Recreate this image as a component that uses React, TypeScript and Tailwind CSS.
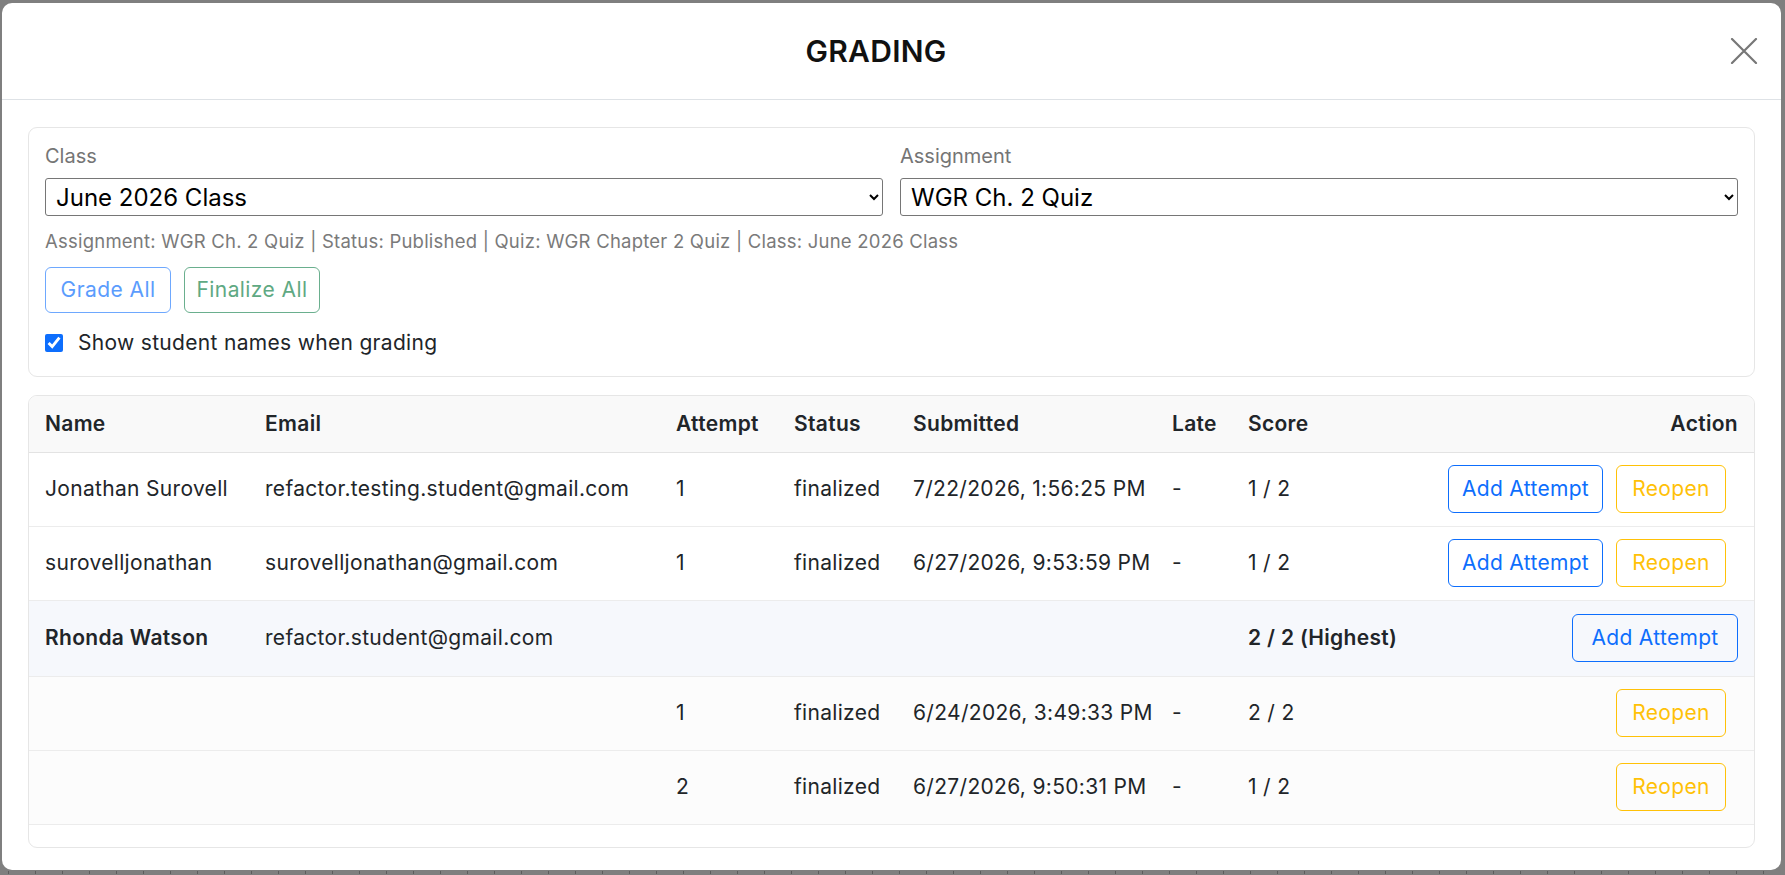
import React from "react";

type Row = {
  name?: string;
  email?: string;
  attempt?: string;
  status?: string;
  submitted?: string;
  late?: string;
  score: string;
  kind: "single" | "group" | "sub";
};

const ROWS: Row[] = [
  {
    name: "Jonathan Surovell",
    email: "refactor.testing.student@gmail.com",
    attempt: "1",
    status: "finalized",
    submitted: "7/22/2026, 1:56:25 PM",
    late: "-",
    score: "1 / 2",
    kind: "single",
  },
  {
    name: "surovelljonathan",
    email: "surovelljonathan@gmail.com",
    attempt: "1",
    status: "finalized",
    submitted: "6/27/2026, 9:53:59 PM",
    late: "-",
    score: "1 / 2",
    kind: "single",
  },
  {
    name: "Rhonda Watson",
    email: "refactor.student@gmail.com",
    score: "2 / 2 (Highest)",
    kind: "group",
  },
  {
    attempt: "1",
    status: "finalized",
    submitted: "6/24/2026, 3:49:33 PM",
    late: "-",
    score: "2 / 2",
    kind: "sub",
  },
  {
    attempt: "2",
    status: "finalized",
    submitted: "6/27/2026, 9:50:31 PM",
    late: "-",
    score: "1 / 2",
    kind: "sub",
  },
];

const HEADERS = ["Name", "Email", "Attempt", "Status", "Submitted", "Late", "Score"];

function AddAttemptButton() {
  return (
    <button className="h-[48px] w-[166px] rounded-[6px] border border-[#0d6efd] text-[21px] tracking-[0.015em] text-[#0d6efd]">
      Add Attempt
    </button>
  );
}

function ReopenButton() {
  return (
    <button className="h-[48px] w-[110px] rounded-[6px] border border-[#ffc107] text-[21px] tracking-[0.015em] text-[#ffc107]">
      Reopen
    </button>
  );
}

export default function App() {
  return (
    <div
      className="relative h-[875px] w-full overflow-hidden bg-[#7f7f7f]"
      style={{ fontFamily: "Inter, 'Noto Sans', sans-serif" }}
    >
      {/* ticks of the page behind the overlay */}
      <div className="absolute bottom-0 left-0 right-0 flex h-[4px] gap-[26px] px-[8px]">
        {Array.from({ length: 66 }).map((_, i) => (
          <span key={i} className="h-[3px] w-px bg-[#5c5c5c]" />
        ))}
      </div>

      <div className="absolute left-[2px] right-[4px] top-[3px] bottom-[5px] flex flex-col rounded-[10px] bg-white text-[#212529]">
        {/* Header */}
        <div className="flex h-[97px] shrink-0 items-center border-b border-[#dee2e6] pl-[26px] pr-[17px]">
          <h2 className="flex-1 text-center text-[30px] font-semibold tracking-[0.01em] text-[#111]">
            GRADING
          </h2>
          <button className="flex h-[40px] w-[40px] items-center justify-center">
            <svg width="28" height="26" viewBox="0 0 28 26" fill="none">
              <path
                d="M2 1L26 25M26 1L2 25"
                stroke="#777"
                strokeWidth="2.2"
                strokeLinecap="round"
              />
            </svg>
          </button>
        </div>

        {/* Body */}
        <div className="flex flex-col px-[26px] pt-[27px]">
          {/* Filters */}
          <div className="rounded-[9px] border border-[#e6e6e6] px-[16px] pb-[18px] pt-[13px]">
            <div className="grid grid-cols-2 gap-[17px]">
              {[
                { label: "Class", value: "June 2026 Class" },
                { label: "Assignment", value: "WGR Ch. 2 Quiz" },
              ].map((f) => (
                <div key={f.label} className="flex flex-col">
                  <label className="text-[20px] leading-[30px] text-[#757575]">
                    {f.label}
                  </label>
                  <select className="mt-[7px] h-[38px] rounded-[3px] border border-[#767676] bg-white pl-[6px] text-[24px] text-black">
                    <option>{f.value}</option>
                  </select>
                </div>
              ))}
            </div>
            <p className="mt-[12px] text-[18.5px] leading-[26px] tracking-[0.012em] text-[#7a7a7a]">
              Assignment: WGR Ch. 2 Quiz | Status: Published | Quiz: WGR Chapter 2 Quiz | Class:
              June 2026 Class
            </p>
            <div className="mt-[13px] flex gap-[13px]">
              <button className="h-[46px] w-[126px] rounded-[6px] border border-[#6ea8fe] text-[21px] tracking-[0.02em] text-[#5b9cfd]">
                Grade All
              </button>
              <button className="h-[46px] w-[136px] rounded-[6px] border border-[#6aaf8e] text-[21px] tracking-[0.02em] text-[#5fa983]">
                Finalize All
              </button>
            </div>
            <label className="mt-[15px] flex items-center gap-[15px] text-[21px] leading-[30px] tracking-[0.015em] text-[#212529]">
              <input
                type="checkbox"
                defaultChecked
                className="h-[18px] w-[18px] accent-[#0d6efd]"
              />
              Show student names when grading
            </label>
          </div>

          {/* Table */}
          <div className="mt-[18px] overflow-hidden rounded-[9px] border border-[#e6e6e6]">
            <table className="w-full table-fixed border-collapse text-left text-[21px] tracking-[0.015em]">
              <colgroup>
                <col className="w-[220px]" />
                <col className="w-[411px]" />
                <col className="w-[118px]" />
                <col className="w-[119px]" />
                <col className="w-[259px]" />
                <col className="w-[76px]" />
                <col className="w-[200px]" />
                <col />
              </colgroup>
              <thead>
                <tr className="h-[56px] border-b border-[#e3e3e3] bg-[#f9f9f9]">
                  {HEADERS.map((h) => (
                    <th key={h} className="px-[16px] font-semibold">
                      {h}
                    </th>
                  ))}
                  <th className="px-[16px] text-right font-semibold">Action</th>
                </tr>
              </thead>
              <tbody>
                {ROWS.map((r, i) => {
                  const bg =
                    r.kind === "group"
                      ? "bg-[#f6f8fc]"
                      : r.kind === "sub"
                        ? "bg-[#fcfcfc]"
                        : "bg-white";
                  const bold = r.kind === "group" ? "font-semibold" : "";
                  return (
                    <tr
                      key={i}
                      className={`${r.kind === "group" ? "h-[76px]" : "h-[74px]"} border-b border-[#ececec] ${bg}`}
                    >
                      <td className={`whitespace-nowrap px-[16px] ${bold}`}>{r.name}</td>
                      <td className="whitespace-nowrap px-[16px]">{r.email}</td>
                      <td className="px-[16px]">{r.attempt}</td>
                      <td className="px-[16px]">{r.status}</td>
                      <td className="whitespace-nowrap px-[16px]">{r.submitted}</td>
                      <td className="px-[16px]">{r.late}</td>
                      <td className={`whitespace-nowrap px-[16px] ${bold}`}>{r.score}</td>
                      <td className="px-[16px]">
                        <div className="flex justify-end gap-[13px]">
                          {r.kind !== "sub" && <AddAttemptButton />}
                          {r.kind !== "group" && (
                            <div className="mr-[12px]">
                              <ReopenButton />
                            </div>
                          )}
                        </div>
                      </td>
                    </tr>
                  );
                })}
              </tbody>
            </table>
            <div className="h-[22px]" />
          </div>
        </div>
      </div>
    </div>
  );
}
